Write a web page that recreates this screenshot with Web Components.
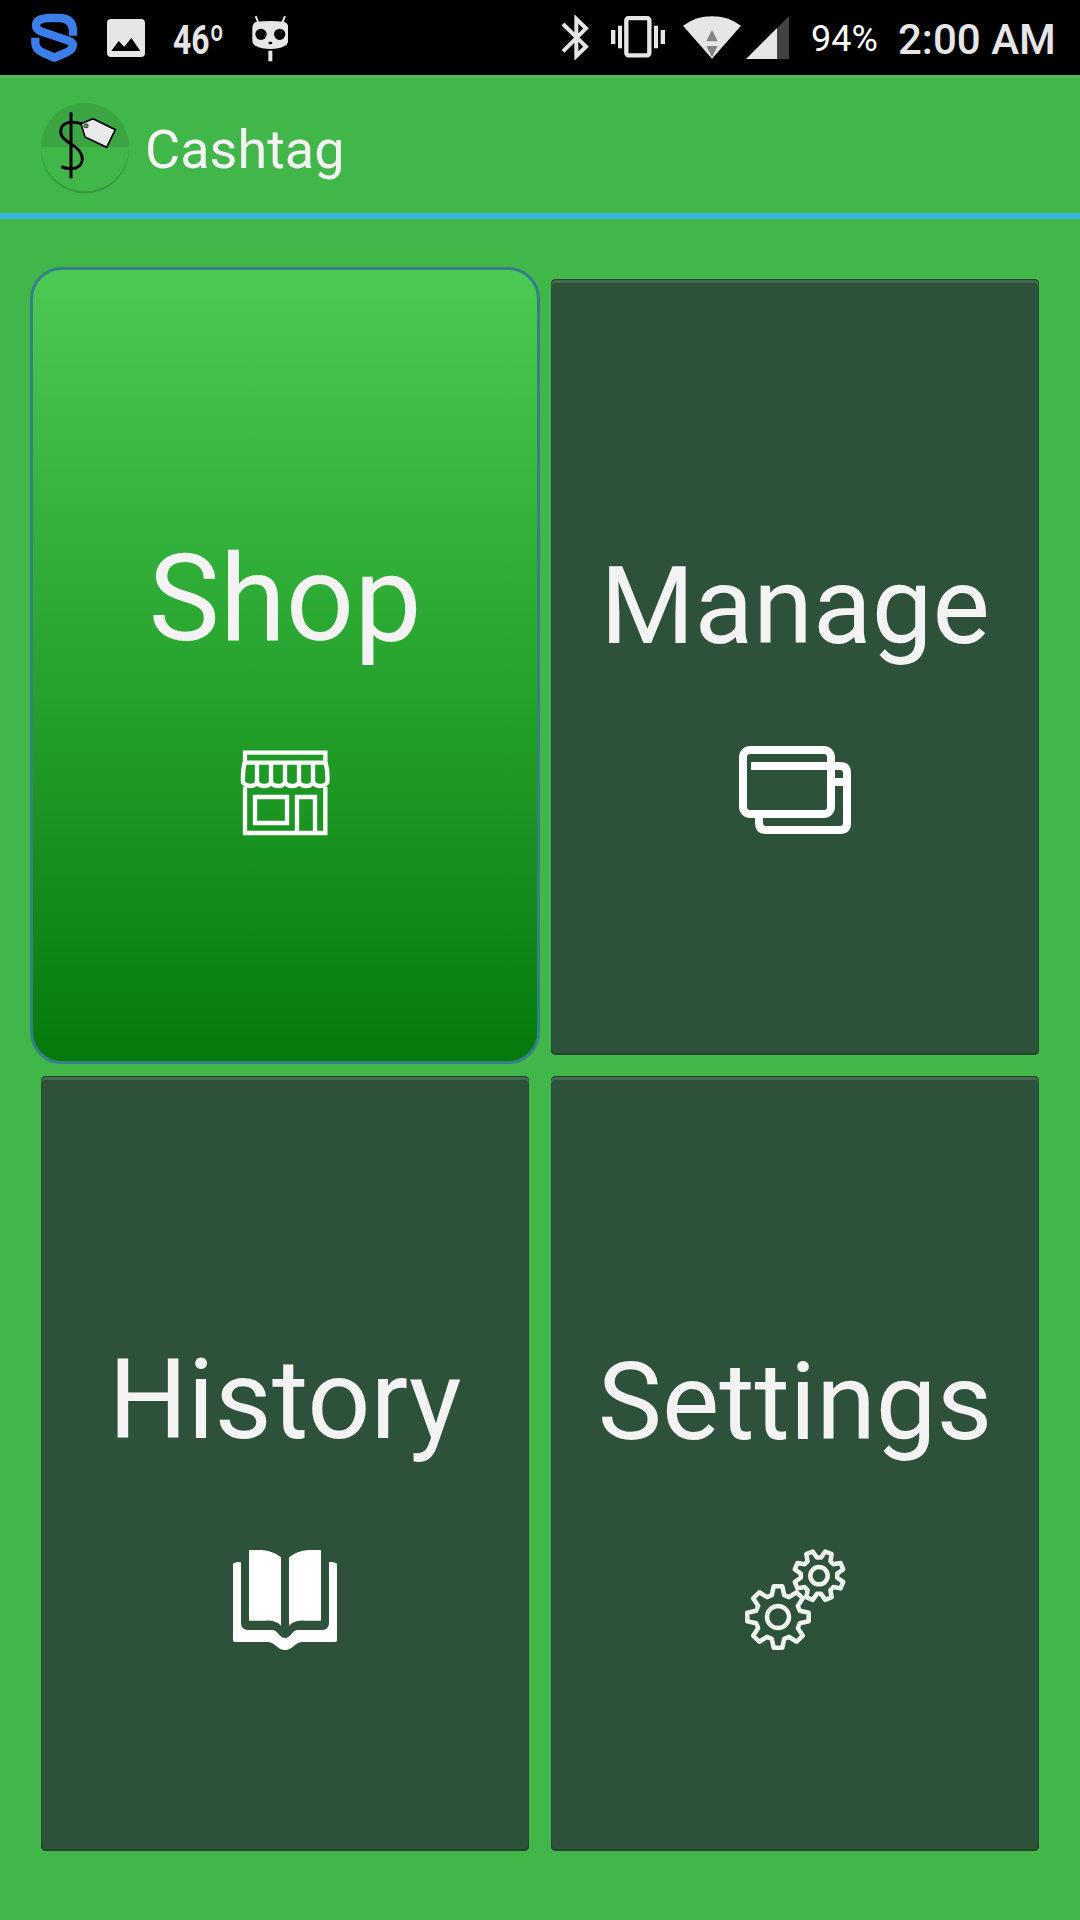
<!DOCTYPE html>
<html lang="en">
<head>
<meta charset="utf-8">
<title>Cashtag</title>
<style>
    html, body {
        margin: 0;
        height: 100%;
    }
    body {
        background: #41b649;
        font-family: Roboto, "Liberation Sans", sans-serif;
        color: #f3f3f3;
        overflow: hidden;
    }
</style>
</head>
<body>
<cash-app></cash-app>

<script>
// outline of a cog with 8 teeth
function gearPath(cx, cy, outer, root, offset) {
    let pts = []
    for (let k = 0; k < 8; k++) {
        let a = k * 45 + offset
        for (let [r, d] of [[root, -16], [outer, -8], [outer, 8], [root, 16]]) {
            let t = (a + d) * Math.PI / 180
            pts.push((cx + r * Math.cos(t)).toFixed(1) + ' ' + (cy + r * Math.sin(t)).toFixed(1))
        }
    }
    return 'M' + pts.join('L') + 'Z'
}

const ICONS = {
    shield: {
        box: '90 40 146 150',
        body: `<path d="M219 108V92Q217 55 176 55H150Q108 56 108 78Q108 89 125 96L205 123Q219 128 219 137Q217 150 200 158L163 174L127 158Q106 148 106 130V114" fill="none" stroke="#3b7de9" stroke-width="25" stroke-linejoin="round"/>`
    },
    photo: {
        box: '321 57 114 114',
        body: `<path fill="#e6e6e6" fill-rule="evenodd" d="M333 57H423Q435 57 435 69V159Q435 171 423 171H333Q321 171 321 159V69Q321 57 333 57ZM334 153H421L394 114L373 140L356 123Z"/>`
    },
    cid: {
        box: '755 45 110 141',
        body: `<g fill="#e6e6e6"><path d="M770 65Q810 61 850 65Q864 68 864 84V120Q864 134 851 139Q836 147 810 147Q784 147 769 139Q756 134 756 120V84Q756 68 770 65Z"/>
            <path d="M804 152H816V184H804Z"/></g>
            <path d="M766 48L774 68M854 48L846 68" stroke="#e6e6e6" stroke-width="6"/>
            <circle cx="782" cy="103" r="17"/><circle cx="838" cy="103" r="17"/><ellipse cx="810" cy="129" rx="6" ry="3.5"/>`
    },
    bluetooth: {
        box: '63 45 84 135',
        body: `<path d="M69 72L138 140L109 168V57L138 85L69 154" fill="none" stroke="#e6e6e6" stroke-width="12"/>`
    },
    vibrate: {
        box: '213 48 162 126',
        body: `<rect x="259" y="54" width="69" height="112" rx="7" fill="none" stroke="#e6e6e6" stroke-width="13"/>
            <path fill="#e6e6e6" d="M213 90H226V132H213ZM234 77H246V145H234ZM342 77H354V145H342ZM362 90H375V132H362Z"/>`
    },
    wifi: {
        box: '429 48 174 129',
        body: `<path fill="#e6e6e6" d="M429 77Q467 49 516 49Q565 49 603 77L516 176Z"/>
            <path fill="#858585" d="M516 89L533 124H499ZM499 138H533L516 172Z"/>`
    },
    signal: {
        box: '618 48 129 129',
        body: `<path fill="#424242" d="M711 84L747 48V177H711Z"/><path fill="#e6e6e6" d="M618 177L711 84V177Z"/>`
    },
    logo: {
        box: '120 60 270 285',
        body: `<circle cx="255" cy="208" r="132" fill="#36963d"/>
            <circle cx="255" cy="202" r="132" fill="#41b649"/>
            <path d="M123 201A132 132 0 0 1 387 201Z" fill="#3ba443"/>
            <g fill="none" stroke="#000">
                <path d="M213 97V295" stroke-width="9"/>
                <path d="M244 131Q222 125 204 128Q181 134 182 157Q183 173 213 192Q247 211 247 239Q244 266 213 266Q195 266 184 260" stroke-width="9"/>
                <path d="M243 131L279 116L346 149L320 202L255 171Z" fill="#e9e9e9" stroke-width="5"/>
                <rect x="252" y="132" width="12" height="11" rx="3" fill="#5c9a69" stroke="#234f2b" stroke-width="3"/>
            </g>`
    },
    shop: {
        box: '0 0 390 360',
        body: `<g fill="none" stroke="#fff" stroke-width="13">
                <path d="M75 170V309H316V170M75 105V68H316V105M75 98H316"/>
                <path d="M74 98Q67 125 69 157Q77 168 91 168Q106 168 111 157V98V157Q118 168 132 168Q148 168 153 157V98V157Q160 168 174 168Q190 168 195 157V98V157Q202 168 216 168Q232 168 237 157V98V157Q244 168 258 168Q274 168 279 157V98V157Q286 168 300 168Q316 168 322 157Q324 125 317 98"/>
                <path d="M105 201H201V279H105ZM231 305V201H285V305"/>
            </g>`
    },
    cards: {
        box: '0 0 450 360',
        body: `<g fill="none" stroke="#fff" stroke-width="24">
                <rect x="69" y="60" width="264" height="192" rx="22"/>
                <path d="M93 108H360Q381 108 381 129V279Q381 300 360 300H138Q117 300 117 279V258M339 156H381"/>
            </g>`
    },
    book: {
        box: '0 0 420 405',
        body: `<g fill="#fff">
                <path d="M102 60H140Q174 62 198 82V287Q181 270 150 272H102Z"/>
                <path d="M318 60H280Q246 62 222 82V287Q239 270 270 272H318Z"/>
                <path d="M54 101Q66 93 78 97V282Q80 299 98 300H174Q184 302 190 311Q198 323 210 324Q222 323 230 311Q236 302 246 300H322Q340 299 342 282V97Q354 93 366 101V333Q364 336 358 336H260Q248 337 240 345Q225 360 210 360Q195 360 180 345Q172 337 160 336H62Q56 336 54 333Z"/>
            </g>`
    },
    gears: {
        box: '0 0 390 405',
        body: `<g fill="none" stroke="#eef5f0" stroke-width="13.5" stroke-linejoin="round">
                <path d="${gearPath(144, 261, 93, 68, 0)}"/>
                <circle cx="144" cy="261" r="33"/>
                <path d="${gearPath(267, 137, 75, 55, 22.5)}"/>
                <circle cx="267" cy="137" r="26"/>
            </g>`
    }
}

// icon art is drawn at three units per pixel
class CashIcon extends HTMLElement {
    constructor() {
        super()
        this.attachShadow({mode: 'open'})
    }
    connectedCallback() {
        let icon = ICONS[this.getAttribute('name')]
        let [, , w, h] = icon.box.split(' ').map(Number)
        this.shadowRoot.innerHTML = `
            <style>
            :host {
                display: block;
                flex: none;
            }
            svg {
                display: block;
            }
            </style>
            <svg width="${w / 3}" height="${h / 3}" viewBox="${icon.box}">${icon.body}</svg>
        `
    }
}
window.customElements.define('cash-icon', CashIcon)

class StatusBar extends HTMLElement {
    constructor() {
        super()
        this.attachShadow({mode: 'open'}).innerHTML = `
            <style>
            :host {
                display: flex;
                align-items: flex-start;
                box-sizing: border-box;
                height: 75px;
                padding: 0 24px 0 30px;
                background: #000;
                color: #e6e6e6;
            }
            .shield { margin-top: 13.3px; }
            .photo { margin: 19px 0 0 28.3px; }
            .temp {
                width: 66px;
                margin: 0 -13px 0 28px;
                font-size: 41px;
                font-weight: 700;
                line-height: 80px;
                transform: scaleX(.775);
                transform-origin: left;
            }
            .cid { margin: 15px 0 0 25.7px; }
            .bluetooth { margin: 15px 0 0 auto; }
            .vibrate { margin: 16px 0 0 22px; }
            .wifi { margin: 16px 0 0 18px; }
            .signal { margin: 16px 0 0 5px; }
            .battery {
                width: 87px;
                margin-left: 22px;
                font-size: 36px;
                line-height: 79px;
                color: #fff;
            }
            .clock {
                width: 158px;
                font-size: 42px;
                font-weight: 500;
                line-height: 79px;
                white-space: nowrap;
            }
            </style>
            <cash-icon class="shield" name="shield"></cash-icon>
            <cash-icon class="photo" name="photo"></cash-icon>
            <span class="temp">46º</span>
            <cash-icon class="cid" name="cid"></cash-icon>
            <cash-icon class="bluetooth" name="bluetooth"></cash-icon>
            <cash-icon class="vibrate" name="vibrate"></cash-icon>
            <cash-icon class="wifi" name="wifi"></cash-icon>
            <cash-icon class="signal" name="signal"></cash-icon>
            <span class="battery">94%</span>
            <span class="clock">2:00 AM</span>
        `
    }
}
window.customElements.define('status-bar', StatusBar)

class TitleBar extends HTMLElement {
    constructor() {
        super()
        this.attachShadow({mode: 'open'}).innerHTML = `
            <style>
            :host {
                display: flex;
                align-items: flex-start;
                box-sizing: border-box;
                height: 144px;
                padding: 25px 0 0 40px;
                border-bottom: 6px solid #36b3de;
                box-shadow: inset 0 3px #51bb58;
            }
            .title {
                margin-left: 15px;
                font-size: 54px;
                line-height: 99px;
            }
            </style>
            <cash-icon name="logo"></cash-icon>
            <div class="title"><slot></slot></div>
        `
    }
}
window.customElements.define('title-bar', TitleBar)

class MenuTile extends HTMLElement {
    constructor() {
        super()
        this.attachShadow({mode: 'open'}).innerHTML = `
            <style>
            :host {
                display: flex;
                box-sizing: border-box;
                padding: 12px 11px 9px;
            }
            .face {
                flex: 1;
                display: flex;
                flex-direction: column;
                align-items: center;
                box-sizing: border-box;
                padding-top: calc(var(--top) - 12px);
                border-radius: 5px;
                background: #2d5239;
                box-shadow: inset 0 1px #24442e, inset 0 4px #466850, inset 0 -2px #24442e, inset 1px 0 #264831, inset -1px 0 #264831;
            }
            :host([active]) {
                padding: 0;
            }
            :host([active]) .face {
                padding-top: calc(var(--top) - 3px);
                border: 3px solid #357f8b;
                border-radius: 32px;
                background: linear-gradient(#4bcb53, #24a22b 54%, #047a0a) border-box;
                box-shadow: none;
            }
            .label {
                height: 140px;
                font-size: var(--size, 108px);
                line-height: 140px;
                white-space: nowrap;
            }
            cash-icon {
                margin-top: var(--gap);
            }
            </style>
            <div class="face">
                <div class="label"><slot></slot></div>
            </div>
        `
    }
    connectedCallback() {
        let icon = document.createElement('cash-icon')
        icon.setAttribute('name', this.getAttribute('icon'))
        this.shadowRoot.querySelector('.face').appendChild(icon)
    }
}
window.customElements.define('menu-tile', MenuTile)

class CashApp extends HTMLElement {
    constructor() {
        super()
        this.attachShadow({mode: 'open'}).innerHTML = `
            <style>
            :host {
                display: flex;
                flex-direction: column;
                height: 1920px;
                width: 1080px;
            }
            .menu {
                flex: 1;
                display: grid;
                grid-template-columns: 1fr 1fr;
                grid-template-rows: 797px 796px;
                padding: 48px 30px 0;
            }
            .shop { --top: 262px; --gap: 61px; --size: 120px; }
            .manage { --top: 269px; --gap: 54px; }
            .history { --top: 266px; --gap: 60px; --size: 111px; }
            .settings { --top: 268px; --gap: 58px; }
            </style>
            <status-bar></status-bar>
            <title-bar>Cashtag</title-bar>
            <div class="menu">
                <menu-tile class="shop" icon="shop" active>Shop</menu-tile>
                <menu-tile class="manage" icon="cards">Manage</menu-tile>
                <menu-tile class="history" icon="book">History</menu-tile>
                <menu-tile class="settings" icon="gears">Settings</menu-tile>
            </div>
        `
    }
}
window.customElements.define('cash-app', CashApp)
</script>
</body>
</html>
